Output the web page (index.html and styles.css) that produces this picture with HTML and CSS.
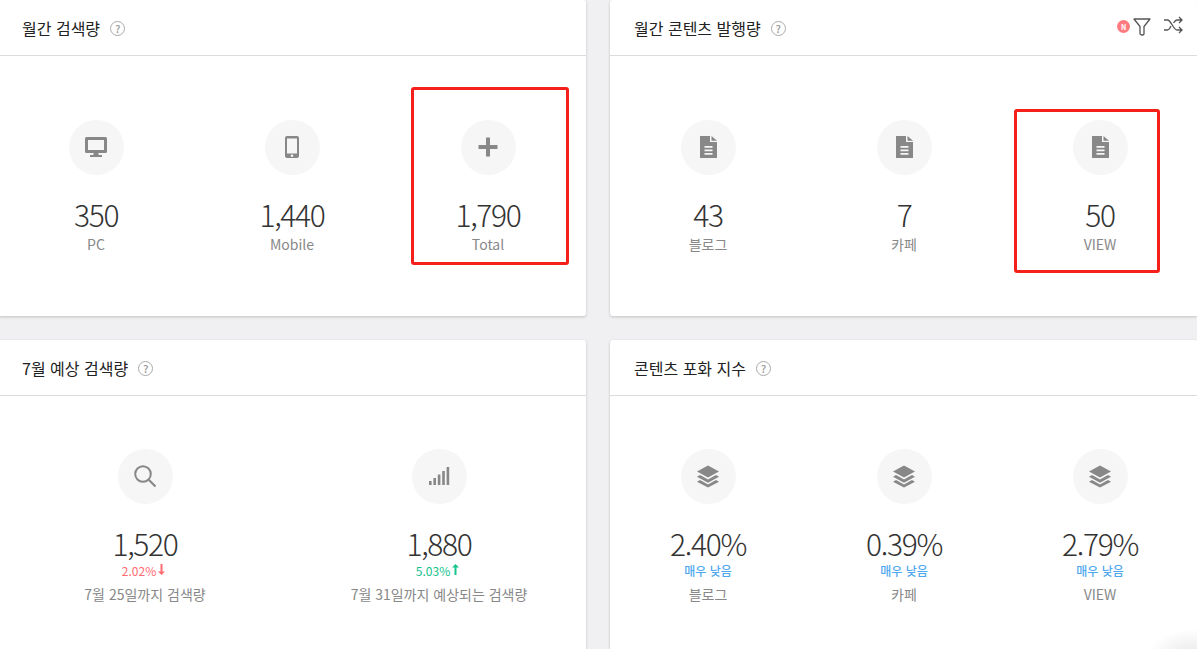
FILE: index.html
```html
<!DOCTYPE html>
<html lang="ko">
<head>
    <meta charset="UTF-8">
    <title>키워드 분석</title>
    <link rel="stylesheet" href="styles.css">
</head>
<body>
    <div class="grid">
        <section class="card">
            <div class="card-head">
                <h3>월간 검색량</h3>
                <span class="help">?</span>
            </div>
            <div class="stats three">
                <div class="stat">
                    <div class="circle">
                        <svg width="24" height="24" viewBox="0 0 24 24"><path fill="#888" fill-rule="evenodd" d="M2.500 2h19A1.500 1.500 0 0 1 23 3.500v13a1.500 1.500 0 0 1-1.500 1.500h-7v2H18v2H6v-2h3.500v-2h-7A1.500 1.500 0 0 1 1 16.500v-13A1.500 1.500 0 0 1 2.500 2zM4 5v10h16V5z"/></svg>
                    </div>
                    <div class="value">350</div>
                    <div class="label">PC</div>
                </div>
                <div class="stat">
                    <div class="circle">
                        <svg width="24" height="24" viewBox="0 0 24 24"><path fill="#888" fill-rule="evenodd" d="M7 1h10a2 2 0 0 1 2 2v18a2 2 0 0 1-2 2H7a2 2 0 0 1-2-2V3a2 2 0 0 1 2-2zM7 3.500v15h10v-15zm5 16a1.300 1.300 0 1 0 0 2.600 1.300 1.300 0 0 0 0-2.600z"/></svg>
                    </div>
                    <div class="value">1,440</div>
                    <div class="label">Mobile</div>
                </div>
                <div class="stat">
                    <div class="circle">
                        <svg width="24" height="24" viewBox="0 0 24 24"><path fill="#888" d="M10 2.500h4V10h7.500v4H14v7.500h-4V14H2.500v-4H10z"/></svg>
                    </div>
                    <div class="value">1,790</div>
                    <div class="label">Total</div>
                </div>
                <div class="mark mark-left"></div>
            </div>
        </section>

        <section class="card">
            <div class="card-head">
                <h3>월간 콘텐츠 발행량</h3>
                <span class="help">?</span>
                <div class="head-tools">
                    <span class="new-dot">N</span>
                    <svg width="18" height="20" viewBox="0 0 18 20"><path fill="none" stroke="#555" stroke-width="1.300" stroke-linejoin="round" d="M1 2h16l-6 7.500V17l-1 1H8.500L7 17V9.500z"/></svg>
                    <svg class="shuffle" width="20" height="20" viewBox="0 0 20 20"><path fill="none" stroke="#555" stroke-width="1.300" d="M1 5h3.500c3.500 0 6 10 9.500 10h4.500M1 15h3.500c1.500 0 2.500-2 3.500-4M10.500 8c1-1.500 2-3 3.500-3h4.500M16 2l3 3-3 3M16 12l3 3-3 3"/></svg>
                </div>
            </div>
            <div class="stats three">
                <div class="stat">
                    <div class="circle">
                        <svg width="24" height="24" viewBox="0 0 24 24"><path fill="#888" fill-rule="evenodd" d="M4 1h10v6h7v16H4zM15.500 1 21 5.800h-5.500zM8.500 11v1.700h8V11zm0 3.500v1.700h8v-1.700zm0 3.500v1.700h8V18z"/></svg>
                    </div>
                    <div class="value">43</div>
                    <div class="label">블로그</div>
                </div>
                <div class="stat">
                    <div class="circle">
                        <svg width="24" height="24" viewBox="0 0 24 24"><path fill="#888" fill-rule="evenodd" d="M4 1h10v6h7v16H4zM15.500 1 21 5.800h-5.500zM8.500 11v1.700h8V11zm0 3.500v1.700h8v-1.700zm0 3.500v1.700h8V18z"/></svg>
                    </div>
                    <div class="value">7</div>
                    <div class="label">카페</div>
                </div>
                <div class="stat">
                    <div class="circle">
                        <svg width="24" height="24" viewBox="0 0 24 24"><path fill="#888" fill-rule="evenodd" d="M4 1h10v6h7v16H4zM15.500 1 21 5.800h-5.500zM8.500 11v1.700h8V11zm0 3.500v1.700h8v-1.700zm0 3.500v1.700h8V18z"/></svg>
                    </div>
                    <div class="value">50</div>
                    <div class="label">VIEW</div>
                </div>
                <div class="mark mark-right"></div>
            </div>
        </section>

        <section class="card">
            <div class="card-head">
                <h3>7월 예상 검색량</h3>
                <span class="help">?</span>
            </div>
            <div class="stats two lower">
                <div class="stat">
                    <div class="circle">
                        <svg width="24" height="24" viewBox="0 0 24 24"><circle cx="10" cy="10" r="7.800" fill="none" stroke="#888" stroke-width="2"/><path stroke="#888" stroke-width="2.200" d="M15.500 15.500l7 7"/></svg>
                    </div>
                    <div class="value">1,520</div>
                    <div class="change down">2.02%<svg class="arrow" width="7" height="11" viewBox="0 0 7 11"><path fill="#ff6b70" d="M2.500 0h2v7.500H7L3.500 11 0 7.500h2.500z"/></svg></div>
                    <div class="label">7월 25일까지 검색량</div>
                </div>
                <div class="stat">
                    <div class="circle">
                        <svg width="24" height="24" viewBox="0 0 24 24"><path fill="#888" d="M2 17h2.600v4H2zM6.400 14h2.600v7H6.400zM10.800 10.500h2.600V21h-2.600zM15.200 7h2.600v14h-2.600zM19.600 3h2.600v18h-2.600z"/></svg>
                    </div>
                    <div class="value">1,880</div>
                    <div class="change up">5.03%<svg class="arrow" width="7" height="11" viewBox="0 0 7 11"><path fill="#14c38e" d="M2.500 11h2V3.500H7L3.500 0 0 3.500h2.500z"/></svg></div>
                    <div class="label">7월 31일까지 예상되는 검색량</div>
                </div>
            </div>
        </section>

        <section class="card">
            <div class="card-head">
                <h3>콘텐츠 포화 지수</h3>
                <span class="help">?</span>
            </div>
            <div class="stats three lower">
                <div class="stat">
                    <div class="circle">
                        <svg width="24" height="24" viewBox="0 0 24 24"><path fill="#888" d="M12 1.500l11 6-11 6-11-6zM4 11l8 4.400 8-4.400 3 1.700-11 6-11-6zM4 16l8 4.400 8-4.400 3 1.700-11 5.800-11-5.800z"/></svg>
                    </div>
                    <div class="value">2.40%</div>
                    <div class="change low">매우 낮음</div>
                    <div class="label">블로그</div>
                </div>
                <div class="stat">
                    <div class="circle">
                        <svg width="24" height="24" viewBox="0 0 24 24"><path fill="#888" d="M12 1.500l11 6-11 6-11-6zM4 11l8 4.400 8-4.400 3 1.700-11 6-11-6zM4 16l8 4.400 8-4.400 3 1.700-11 5.800-11-5.800z"/></svg>
                    </div>
                    <div class="value">0.39%</div>
                    <div class="change low">매우 낮음</div>
                    <div class="label">카페</div>
                </div>
                <div class="stat">
                    <div class="circle">
                        <svg width="24" height="24" viewBox="0 0 24 24"><path fill="#888" d="M12 1.500l11 6-11 6-11-6zM4 11l8 4.400 8-4.400 3 1.700-11 6-11-6zM4 16l8 4.400 8-4.400 3 1.700-11 5.800-11-5.800z"/></svg>
                    </div>
                    <div class="value">2.79%</div>
                    <div class="change low">매우 낮음</div>
                    <div class="label">VIEW</div>
                </div>
            </div>
        </section>
    </div>
    <div class="corner-glow"></div>
</body>
</html>
```

FILE: styles.css
```css
html, body {
    height: 100%;
}

body {
    margin: 0;
    background-color: #f0f0f2;
    color: #333;
    font-family: "Noto Sans CJK KR", "Noto Sans", sans-serif;
    overflow: hidden;
    position: relative;
}

.grid {
    display: grid;
    grid-template-columns: 588px 588px;
    grid-auto-rows: 316px;
    column-gap: 24px;
    row-gap: 24px;
    margin-left: -2px;
    height: 100vh;
    overflow: hidden;
}

.card {
    background-color: #fff;
    border-radius: 3px;
    box-shadow: 0 1px 3px rgba(0, 0, 0, 0.2);
    min-width: 0;
}

.card-head {
    display: flex;
    align-items: center;
    height: 55px;
    padding-left: 24px;
    border-bottom: 1px solid #dcdcdc;
    position: relative;
}

.card-head h3 {
    margin: 0;
    font-size: 16px;
    font-weight: 400;
    line-height: 20px;
    color: #222;
}

.help {
    display: flex;
    align-items: center;
    justify-content: center;
    width: 13px;
    height: 13px;
    margin-left: 10px;
    margin-top: 2px;
    border: 1.500px solid #aaa;
    border-radius: 50%;
    color: #999;
    font-size: 11px;
    font-weight: 500;
    line-height: 1;
}

.head-tools {
    display: flex;
    align-items: center;
    margin-left: auto;
    height: 20px;
    padding-right: 15px;
    position: relative;
    top: -1px;
}

.new-dot {
    display: flex;
    align-items: center;
    justify-content: center;
    width: 13px;
    height: 13px;
    margin-right: 3px;
    border-radius: 50%;
    background-color: #ff7b80;
    color: #fff;
    font-size: 7px;
    font-weight: 700;
}

.shuffle {
    margin-left: 12px;
    margin-top: -3px;
}

.stats {
    display: grid;
    padding-top: 64px;
    position: relative;
}

.stats.lower {
    padding-top: 53px;
}

.stats.three {
    grid-template-columns: repeat(3, 1fr);
}

.stats.two {
    grid-template-columns: repeat(2, 1fr);
}

.stat {
    display: flex;
    flex-direction: column;
    align-items: center;
}

.circle {
    display: flex;
    align-items: center;
    justify-content: center;
    width: 55px;
    height: 55px;
    border-radius: 50%;
    background-color: #f6f6f6;
}

.circle svg {
    margin-top: -1px;
}

.value {
    margin-top: 20px;
    margin-bottom: 1px;
    font-size: 30px;
    font-weight: 300;
    line-height: 38px;
    letter-spacing: -1.300px;
    color: #333;
}

.label {
    margin-top: 1px;
    font-size: 14px;
    line-height: 18px;
    color: #888;
}

.lower .label {
    margin-top: 6px;
}

.change {
    display: flex;
    align-items: center;
    font-size: 12px;
    line-height: 16px;
}

.change .arrow {
    margin-left: 2px;
    margin-right: 3px;
    margin-top: -3px;
}

.down {
    color: #ff6b70;
}

.up {
    color: #14c38e;
}

.low {
    color: #4fa8ef;
    font-weight: 500;
}

/* Red highlight boxes drawn on top of the last column */
.mark {
    position: absolute;
    border: 3px solid #f6201a;
    border-radius: 3px;
    box-sizing: border-box;
}

.mark-left {
    left: 413px;
    top: 31px;
    width: 158px;
    height: 178px;
}

.mark-right {
    left: 404px;
    top: 53px;
    width: 146px;
    height: 164px;
}

.corner-glow {
    position: absolute;
    right: -40px;
    bottom: -40px;
    width: 90px;
    height: 60px;
    border-radius: 50%;
    background: radial-gradient(closest-side, rgba(0, 0, 0, 0.1), rgba(0, 0, 0, 0));
}
```
